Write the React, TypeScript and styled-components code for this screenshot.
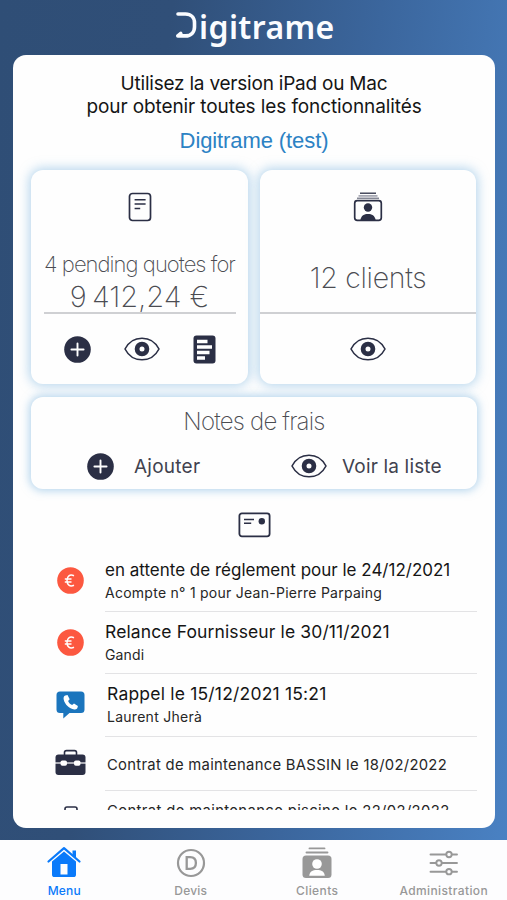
import React from "react";
import styled, { createGlobalStyle } from "styled-components";

const INK = "#2b2f45";

const GlobalStyle = createGlobalStyle`
  * { box-sizing: border-box; }
  body { margin: 0; font-family: Inter, "Liberation Sans", sans-serif; }
  svg { flex: none; }
`;

const Screen = styled.div`
  width: 507px;
  height: 900px;
  overflow: hidden;
  display: flex;
  flex-direction: column;
  background: linear-gradient(97deg, #2f4e76 0%, #304f78 28%, #3b669d 62%, #4a82c4 100%);
`;

const Header = styled.header`
  height: 55px;
  flex: none;
  display: flex;
  padding: 5px 0 0 175px;
`;

const LogoMark = styled.svg`
  width: 22px;
  height: 27px;
  margin: 7px 2px 0 0;
`;

const LogoText = styled.span`
  font: 600 32px/43px "Noto Sans", sans-serif;
  letter-spacing: 0.4px;
  color: #fafcff;
`;

const Panel = styled.main`
  width: 482px;
  height: 773px;
  flex: none;
  margin-left: 13px;
  padding: 17px 18px 18px 18px;
  border-radius: 13px;
  background: #fefefe;
  display: flex;
  flex-direction: column;
`;

const Intro = styled.p<{ $spacing: number }>`
  margin: 0;
  text-align: center;
  font-size: 19px;
  line-height: 23px;
  letter-spacing: ${(p) => p.$spacing}px;
  color: #151515;
  white-space: nowrap;
`;

const Company = styled.h1`
  margin: 11px 0 0;
  text-align: center;
  font: 400 22px/24px "Liberation Sans", sans-serif;
  letter-spacing: -0.1px;
  color: #2c82c4;
`;

const Cards = styled.div`
  display: grid;
  grid-template-columns: 217px 216px;
  column-gap: 12px;
  margin-top: 17px;
`;

const Card = styled.section`
  height: 214px;
  border-radius: 12px;
  background: #fefefe;
  box-shadow: 0 0 11px 2px rgba(126, 183, 224, 0.55);
  display: flex;
  flex-direction: column;
  align-items: center;
`;

const CardTop = styled.div<{ $inset?: boolean }>`
  width: ${(p) => (p.$inset ? "192px" : "100%")};
  height: 144px;
  flex: none;
  border-bottom: 2px solid #cfd0d3;
  display: flex;
  flex-direction: column;
  align-items: center;
  padding-top: 22px;
`;

const Thin = styled.span<{ $size: number; $top: number; $line: number; $spacing?: number }>`
  flex: none;
  font-weight: 200;
  font-size: ${(p) => p.$size}px;
  line-height: ${(p) => p.$line}px;
  margin-top: ${(p) => p.$top}px;
  letter-spacing: ${(p) => p.$spacing ?? 0}px;
  color: #4b4c52;
  white-space: nowrap;
`;

const CardActions = styled.div`
  width: 100%;
  height: 70px;
  display: flex;
  align-items: center;
  justify-content: center;
  gap: 33px;
`;

const Expenses = styled.section`
  height: 92px;
  margin-top: 13px;
  border-radius: 12px;
  background: #fefefe;
  box-shadow: 0 0 9px 2px rgba(126, 183, 224, 0.55);
  text-align: center;
  padding-top: 10px;
`;

const ExpenseActions = styled.div`
  display: flex;
  align-items: center;
  height: 28px;
  margin-top: 15px;
  padding-left: 55.5px;
`;

const ActionLabel = styled.span<{ $left: number; $width: number; $spacing: number }>`
  margin-left: ${(p) => p.$left}px;
  width: ${(p) => p.$width}px;
  flex: none;
  text-align: left;
  font-size: 19px;
  letter-spacing: ${(p) => p.$spacing}px;
  color: #41424f;
  white-space: nowrap;
`;

const NotesIcon = styled.div`
  display: flex;
  justify-content: center;
  margin-top: 23px;
  height: 27px;
`;

const List = styled.ul`
  list-style: none;
  margin: 10px 0 0;
  padding: 0;
  flex: 1;
  overflow: hidden;
`;

const Item = styled.li<{ $height: number }>`
  display: flex;
  height: ${(p) => p.$height}px;
`;

const ItemIcon = styled.div<{ $shift: number }>`
  width: 74px;
  flex: none;
  display: flex;
  justify-content: center;
  align-items: flex-start;
  padding: ${(p) => p.$shift}px 0 0 5px;
`;

const ItemBody = styled.div<{ $indent?: boolean; $top: number }>`
  flex: 1;
  min-width: 0;
  padding: ${(p) => p.$top}px 0 0 ${(p) => (p.$indent ? 2 : 0)}px;
  border-bottom: 1px solid #e3e3e5;
`;

const Title = styled.div<{ $size?: number; $spacing: number }>`
  font-size: ${(p) => p.$size ?? 17.5}px;
  line-height: 24px;
  letter-spacing: ${(p) => p.$spacing}px;
  color: #151515;
  white-space: nowrap;
`;

const Sub = styled.div<{ $size?: number; $spacing: number }>`
  font-size: ${(p) => p.$size ?? 14}px;
  line-height: 20px;
  margin-top: 1px;
  letter-spacing: ${(p) => p.$spacing}px;
  color: #262626;
  white-space: nowrap;
`;

const TabBar = styled.nav`
  height: 60px;
  margin-top: auto;
  background: #fdfdfe;
  display: grid;
  grid-template-columns: repeat(4, 126.5px);
  padding: 6px 0 0 1px;
`;

const Tab = styled.div<{ $active?: boolean }>`
  display: flex;
  flex-direction: column;
  align-items: center;
  color: ${(p) => (p.$active ? "#0a7afa" : "#989898")};
`;

const TabLabel = styled.span<{ $spacing: number }>`
  font-size: 12px;
  font-weight: 500;
  line-height: 16px;
  margin-top: 3px;
  letter-spacing: ${(p) => p.$spacing}px;
`;

const Plus = () => (
  <svg width="27" height="27" viewBox="0 0 27 27">
    <circle cx="13.5" cy="13.5" r="13.3" fill={INK} />
    <path d="M13.5 7.4v12.2M7.4 13.5h12.2" stroke="#fff" strokeWidth="1.9" strokeLinecap="round" />
  </svg>
);

const Eye = () => (
  <svg width="36" height="24" viewBox="0 0 36 24">
    <path
      d="M1 12C4.500 5.200 10.500 1.200 18 1.200S31.500 5.200 35 12C31.500 18.800 25.500 22.800 18 22.800S4.500 18.800 1 12Z"
      fill="none"
      stroke={INK}
      strokeWidth="1.600"
      strokeLinejoin="round"
    />
    <circle cx="18" cy="12" r="4.900" fill="none" stroke={INK} strokeWidth="4.800" />
  </svg>
);

const Doc = () => (
  <svg width="24" height="30" viewBox="0 0 24 30">
    <rect x="1.500" y="1.500" width="21" height="27" rx="3" fill="none" stroke={INK} strokeWidth="1.700" />
    <path d="M6.600 7.700h11M6.600 12h11M6.600 16.500h5.600" stroke={INK} strokeWidth="1.500" />
  </svg>
);

const DocFilled = () => (
  <svg width="23" height="29" viewBox="0 0 23 29">
    <rect x="0.500" y="0.500" width="22" height="28" rx="3" fill={INK} />
    <path d="M4 6.500h10.500M4 12h15M4 17.500h12.500M4 23h8" stroke="#fff" strokeWidth="3.700" />
  </svg>
);

const ClientsOutline = () => (
  <svg width="30" height="30" viewBox="0 0 30 30">
    <path d="M7 1.200h16" stroke={INK} strokeWidth="1.300" />
    <path d="M5.500 3.900h19" stroke="#a3a5b0" strokeWidth="1.700" />
    <path d="M4 6.200h22" stroke="#5c6072" strokeWidth="1.100" />
    <rect x="1.700" y="8.700" width="26.600" height="19.600" rx="2.600" fill="none" stroke={INK} strokeWidth="1.700" />
    <circle cx="15" cy="15.500" r="4.200" fill={INK} />
    <path d="M7.300 28c1-4.500 3.800-6 7.700-6s6.700 1.500 7.700 6Z" fill={INK} />
  </svg>
);

const CardIcon = () => (
  <svg width="33" height="26" viewBox="0 0 33 26">
    <rect x="1.400" y="1.300" width="30.200" height="23" rx="2.500" fill="none" stroke={INK} strokeWidth="1.800" />
    <path d="M6 7.600h10M6 11.200h7.200" stroke={INK} strokeWidth="1.500" />
    <circle cx="23.800" cy="9.300" r="3.200" fill={INK} />
  </svg>
);

const Euro = () => (
  <svg width="27" height="27" viewBox="0 0 27 27">
    <circle cx="13.500" cy="13.500" r="13.300" fill="#fc5840" />
    <path d="M17 8.700c-4.300-1.900-7 .500-7 4.800s2.700 6.700 7 4.800M7.800 12h6.700M7.800 15h6.700" fill="none" stroke="#fff" strokeWidth="1.500" />
  </svg>
);

const PhoneBubble = () => (
  <svg width="29" height="28" viewBox="0 0 29 28">
    <path d="M4 .5h21a3.500 3.500 0 0 1 3.500 3.500v14.500A3.500 3.500 0 0 1 25 22H13.500L7.300 27.500V22H4A3.500 3.500 0 0 1 .5 18.500V4A3.500 3.500 0 0 1 4 .5Z" fill="#1b75bd" />
    <path d="M9.300 4.500 11.500 4l2.200 4.300-1.600 1.800c.8 2 2 3.200 4 4l1.900-1.500 3.900 2.300-.5 2.100c-.3 1.100-1.700 1.700-3.100 1.400-5.200-1-9.400-4.700-10.600-9.900-.4-1.700.1-3.600 1.600-4Z" fill="#fff" />
  </svg>
);

const Briefcase = () => (
  <svg width="31" height="27" viewBox="0 0 31 27">
    <path d="M9.500 6.500V3.600a2 2 0 0 1 2-2h8a2 2 0 0 1 2 2v2.900" fill="none" stroke={INK} strokeWidth="1.600" />
    <rect x="0.500" y="5.500" width="30" height="20.500" rx="3" fill={INK} />
    <path d="M0 14h31" stroke="#fff" strokeWidth="1.200" />
    <rect x="5.500" y="11.500" width="6.500" height="5.200" rx="1.800" fill="#fff" />
    <rect x="19" y="11.500" width="6.500" height="5.200" rx="1.800" fill="#fff" />
  </svg>
);

const Home = () => (
  <svg width="34" height="34" viewBox="0 0 34 34" fill="currentColor">
    <path d="M1.500 15.500 17 2.200l15.500 13.300" fill="none" stroke="currentColor" strokeWidth="2.200" strokeLinecap="round" strokeLinejoin="round" />
    <path d="M25.500 4.500H29v8l-3.500-3Z" />
    <path fillRule="evenodd" d="M5 15.400 17 5.500l12 9.900v13a2.600 2.600 0 0 1-2.600 2.600H7.600A2.600 2.600 0 0 1 5 28.400ZM13.500 18v10.500h7V18Z" />
  </svg>
);

const Quote = () => (
  <svg width="34" height="34" viewBox="0 0 34 34" fill="none" stroke="currentColor">
    <circle cx="17" cy="17" r="13" strokeWidth="2.200" />
    <path d="M12.700 11.200h3.500c4 0 5.700 2.300 5.700 5.800s-1.700 5.800-5.700 5.800h-3.500Z" strokeWidth="2.300" />
  </svg>
);

const ClientsFilled = () => (
  <svg width="34" height="34" viewBox="0 0 34 34" fill="currentColor">
    <path d="M9.500 2.400h15M6.500 6.500h21" stroke="currentColor" strokeWidth="1.900" strokeLinecap="round" />
    <rect x="2.500" y="9.500" width="29" height="22.500" rx="3.500" />
    <circle cx="17" cy="18" r="4.800" fill="#fff" />
    <path d="M9.200 29.700c.6-4.200 3.300-5.700 7.800-5.700s7.200 1.500 7.800 5.700Z" fill="#fff" />
  </svg>
);

const Sliders = () => (
  <svg width="34" height="34" viewBox="0 0 34 34" fill="#fdfdfe" stroke="currentColor" strokeWidth="1.900" strokeLinecap="round">
    <path d="M3.500 8.500h26.500M3.500 17h26.500M3.500 25.700h26.500" />
    <circle cx="22" cy="8.500" r="2.700" />
    <circle cx="12" cy="17" r="2.700" />
    <circle cx="22" cy="25.700" r="2.700" />
  </svg>
);

const MiniDoc = () => (
  <svg width="14" height="20" viewBox="0 0 14 20">
    <rect x="1" y="1" width="12" height="18" rx="2" fill="none" stroke={INK} strokeWidth="1.600" />
  </svg>
);

export default function App() {
  return (
    <Screen>
      <GlobalStyle />
      <Header>
        <LogoMark viewBox="0 0 22 27">
          <path
            d="M3 2h7.500c5.500 0 9 3.700 9 8.800v4.200c0 5.100-3.500 8.900-9 8.900H2.800L5.800 21.500"
            fill="none"
            stroke="#fafcff"
            strokeWidth="3.600"
            strokeLinecap="round"
            strokeLinejoin="round"
          />
        </LogoMark>
        <LogoText>igitrame</LogoText>
      </Header>
      <Panel>
        <Intro $spacing={-0.22}>Utilisez la version iPad ou Mac</Intro>
        <Intro $spacing={-0.1}>pour obtenir toutes les fonctionnalités</Intro>
        <Company>Digitrame (test)</Company>
        <Cards>
          <Card>
            <CardTop $inset>
              <Doc />
              <Thin $size={22} $top={27} $line={31} $spacing={-0.95}>4 pending quotes for</Thin>
              <Thin $size={29} $top={0} $line={34} $spacing={-0.5}>{"9\u202f412,24 €"}</Thin>
            </CardTop>
            <CardActions>
              <Plus />
              <Eye />
              <DocFilled />
            </CardActions>
          </Card>
          <Card>
            <CardTop>
              <ClientsOutline />
              <Thin $size={28.5} $top={38} $line={36} $spacing={-0.3}>12 clients</Thin>
            </CardTop>
            <CardActions>
              <Eye />
            </CardActions>
          </Card>
        </Cards>
        <Expenses>
          <Thin $size={24} $top={0} $line={30} $spacing={-0.8}>Notes de frais</Thin>
          <ExpenseActions>
            <Plus />
            <ActionLabel $left={20.5} $width={157} $spacing={0.25}>Ajouter</ActionLabel>
            <Eye />
            <ActionLabel $left={15} $width={110} $spacing={0.17}>Voir la liste</ActionLabel>
          </ExpenseActions>
        </Expenses>
        <NotesIcon>
          <CardIcon />
        </NotesIcon>
        <List>
          <Item $height={63}>
            <ItemIcon $shift={18}><Euro /></ItemIcon>
            <ItemBody $top={9}>
              <Title $size={17} $spacing={0}>en attente de réglement pour le 24/12/2021</Title>
              <Sub $spacing={0.26}>Acompte n° 1 pour Jean-Pierre Parpaing</Sub>
            </ItemBody>
          </Item>
          <Item $height={62}>
            <ItemIcon $shift={17}><Euro /></ItemIcon>
            <ItemBody $top={8}>
              <Title $spacing={0.12}>Relance Fournisseur le 30/11/2021</Title>
              <Sub $spacing={0.15}>Gandi</Sub>
            </ItemBody>
          </Item>
          <Item $height={63}>
            <ItemIcon $shift={17}><PhoneBubble /></ItemIcon>
            <ItemBody $indent $top={8}>
              <Title $spacing={0.2}>Rappel le 15/12/2021 15:21</Title>
              <Sub $spacing={0.27}>Laurent Jherà</Sub>
            </ItemBody>
          </Item>
          <Item $height={54}>
            <ItemIcon $shift={12}><Briefcase /></ItemIcon>
            <ItemBody $indent $top={17}>
              <Sub $size={14.8} $spacing={0.3}>Contrat de maintenance BASSIN le 18/02/2022</Sub>
            </ItemBody>
          </Item>
          <Item $height={54}>
            <ItemIcon $shift={15}><MiniDoc /></ItemIcon>
            <ItemBody $indent $top={9}>
              <Sub $size={14.8} $spacing={0.38}>Contrat de maintenance piscine le 22/02/2022</Sub>
            </ItemBody>
          </Item>
        </List>
      </Panel>
      <TabBar>
        <Tab $active><Home /><TabLabel $spacing={0.15}>Menu</TabLabel></Tab>
        <Tab><Quote /><TabLabel $spacing={0.2}>Devis</TabLabel></Tab>
        <Tab><ClientsFilled /><TabLabel $spacing={0.4}>Clients</TabLabel></Tab>
        <Tab><Sliders /><TabLabel $spacing={0.38}>Administration</TabLabel></Tab>
      </TabBar>
    </Screen>
  );
}
